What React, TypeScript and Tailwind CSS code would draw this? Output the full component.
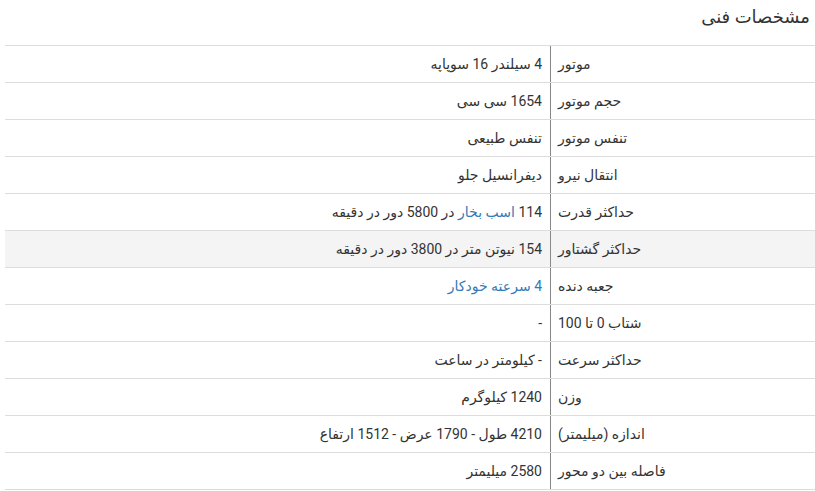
const specs: { label: string; value: React.ReactNode }[] = [
  { label: 'موتور', value: '4 سیلندر 16 سوپاپه' },
  { label: 'حجم موتور', value: '1654 سی سی' },
  { label: 'تنفس موتور', value: 'تنفس طبیعی' },
  { label: 'انتقال نیرو', value: 'دیفرانسیل جلو' },
  {
    label: 'حداکثر قدرت',
    value: (
      <>
        114 <span className="text-[#337ab7]">اسب بخار</span> در 5800 دور در دقیقه
      </>
    ),
  },
  { label: 'حداکثر گشتاور', value: '154 نیوتن متر در 3800 دور در دقیقه' },
  { label: 'جعبه دنده', value: <span className="text-[#337ab7]">4 سرعته خودکار</span> },
  { label: 'شتاب 0 تا 100', value: '-' },
  { label: 'حداکثر سرعت', value: '- کیلومتر در ساعت' },
  { label: 'وزن', value: '1240 کیلوگرم' },
  { label: 'اندازه (میلیمتر)', value: '4210 طول - 1790 عرض - 1512 ارتفاع' },
  { label: 'فاصله بین دو محور', value: '2580 میلیمتر' },
]

function SpecRow({ label, value, highlight }: { label: string; value: React.ReactNode; highlight?: boolean }) {
  return (
    <div className={`flex h-[37px] border-b border-[#ddd] ${highlight ? 'bg-[#f4f4f4]' : ''}`}>
      <div className="w-[265px] shrink-0 border-l border-[#888] pl-[7px] flex items-center justify-end">
        <span>{label}</span>
      </div>
      <div className="flex-1 pr-[8px] flex items-center justify-start">
        <span>{value}</span>
      </div>
    </div>
  )
}

export default function App() {
  return (
    <div dir="rtl" className="bg-white text-[#333] pl-[5px] font-['Roboto','DejaVu_Sans',sans-serif]">
      <div className="h-[46px] border-b border-[#ddd] pr-[5px]">
        <h3 className="text-[18px] leading-[34px]">مشخصات فنی</h3>
      </div>
      <div className="text-[14px]">
        {specs.map((s, i) => (
          <SpecRow key={s.label} label={s.label} value={s.value} highlight={i === 5} />
        ))}
      </div>
    </div>
  )
}
